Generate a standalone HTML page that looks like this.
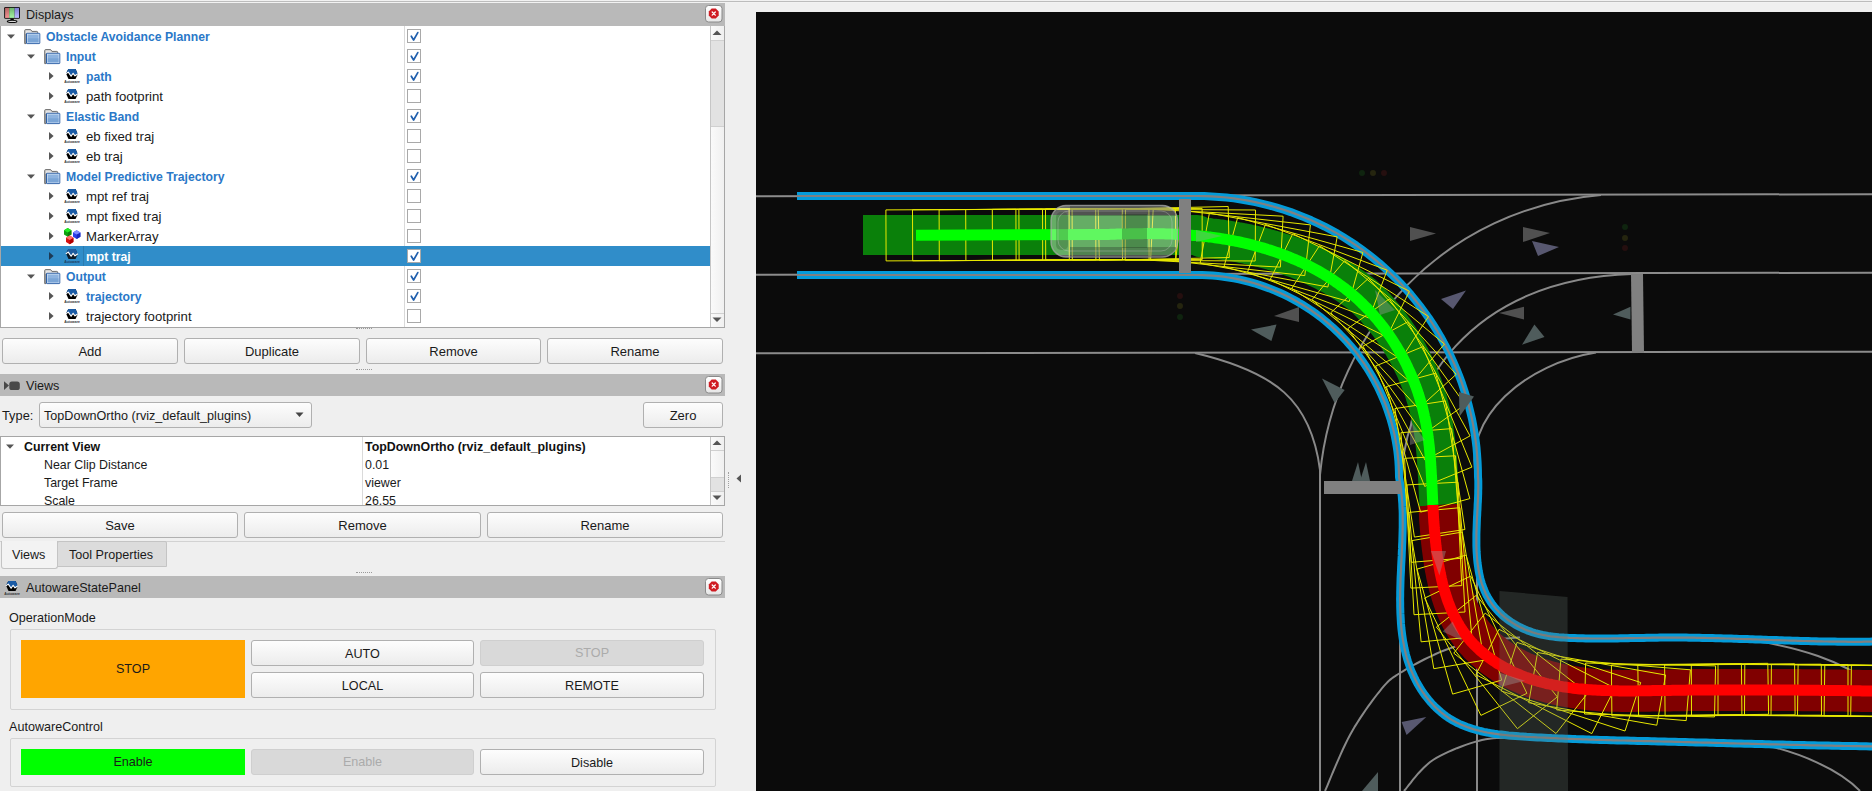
<!DOCTYPE html>
<html><head><meta charset="utf-8"><style>
*{box-sizing:border-box;margin:0;padding:0}
html,body{width:1872px;height:791px;overflow:hidden;background:#efefef;font-family:"Liberation Sans",sans-serif;font-size:13px;color:#1a1a1a;position:relative}
.a{position:absolute}
.tx{white-space:nowrap;line-height:16px}
.hdr{position:absolute;left:0;width:725px;height:22px;background:#b9b9b9}
.cb{position:absolute;left:407px;width:14px;height:14px;border:1px solid #a9a9a9;background:#fff}
.btn{position:absolute;border:1px solid #b0b0b0;border-radius:3px;background:linear-gradient(#fdfdfd,#ececec);text-align:center;font-size:13px;color:#1a1a1a;white-space:nowrap}
</style></head><body>
<div class="a" style="left:0;top:0;width:1872px;height:1px;background:#f1f1f1"></div>
<div class="a" style="left:0;top:1px;width:1872px;height:1px;background:#bcbcbc"></div>
<div class="a" style="left:0;top:2px;width:1872px;height:1px;background:#f2f2f2"></div>
<div class="hdr" style="top:3px;height:23px"></div>
<svg class="a" style="left:4px;top:6px" width="17" height="17" viewBox="0 0 17 17">
<defs><linearGradient id="mr" x1="0" y1="0" x2="0" y2="1"><stop offset="0" stop-color="#b46464"/><stop offset="1" stop-color="#f39393"/></linearGradient>
<linearGradient id="mg" x1="0" y1="0" x2="0" y2="1"><stop offset="0" stop-color="#6cb46c"/><stop offset="1" stop-color="#a6f3a6"/></linearGradient>
<linearGradient id="mb" x1="0" y1="0" x2="0" y2="1"><stop offset="0" stop-color="#7c7cd0"/><stop offset="1" stop-color="#bcbcff"/></linearGradient></defs>
<rect x="0.2" y="0.9" width="15.8" height="11.9" rx="1.3" fill="#080808"/>
<rect x="1.1" y="1.8" width="4.1" height="10.1" fill="url(#mr)"/><rect x="5.2" y="1.8" width="5.4" height="10.1" fill="url(#mg)"/><rect x="10.6" y="1.8" width="4.5" height="10.1" fill="url(#mb)"/>
<path d="M6.6 12.6 H9.6 L9.9 14.2 H6.3Z" fill="#080808"/>
<ellipse cx="8.1" cy="15.4" rx="4.8" ry="1.2" fill="#d8d8d8" stroke="#080808" stroke-width="1.1"/>
</svg>
<div class="a tx" style="left:26px;top:7px;font-size:12.6px;color:#1a1a1a">Displays</div>
<svg class="a" style="left:705px;top:5px" width="18" height="18" viewBox="0 0 18 18">
<defs><linearGradient id="cg" x1="0" y1="0" x2="0" y2="1"><stop offset="0" stop-color="#fff"/><stop offset="1" stop-color="#e6e6e6"/></linearGradient></defs>
<rect x="0.5" y="0.5" width="16.5" height="16.5" rx="3" fill="url(#cg)" stroke="#8a8a8a"/>
<path d="M6.7 3.6 H10.8 L13.7 6.5 V10.6 L10.8 13.5 H6.7 L3.8 10.6 V6.5Z" fill="#cf1b22"/>
<path d="M7.2 7.0 L10.3 10.1 M10.3 7.0 L7.2 10.1" stroke="#fff" stroke-width="1.3" stroke-linecap="round"/>
</svg>
<div class="a" style="left:0;top:26px;width:725px;height:302px;background:#fff;border-left:1px solid #a6a6a6;border-right:1px solid #a6a6a6;border-bottom:1px solid #a6a6a6"></div>
<div class="a" style="left:404px;top:26px;width:1px;height:301px;background:#dadada"></div>
<svg class="a" style="left:7px;top:34px" width="10" height="6" viewBox="0 0 10 6"><path d="M0 0.5 H8 L4 4.8Z" fill="#555"/></svg>
<svg class="a" style="left:24px;top:29px" width="17" height="16" viewBox="0 0 17 16">
<path d="M0.7 14.6 V1.6 Q0.7 0.6 1.7 0.6 H6.6 L8 2.4 H12.8 Q13.6 2.4 13.6 3.2 V5 H2 V14.6Z" fill="#c9c9c9" stroke="#6e6e6e" stroke-width="1"/>
<path d="M1.8 1.6 H6.2 L7.6 3.4 H12.6 V4.2 H1.8Z" fill="#e4e4e4"/>
<rect x="2.5" y="4.3" width="13.3" height="10.3" rx="0.6" fill="#8db3df" stroke="#2d5fa6" stroke-width="1"/>
<rect x="3.4" y="5.2" width="11.5" height="8.5" fill="none" stroke="#c9dbf1" stroke-width="0.8"/>
<rect x="3.8" y="9.3" width="10.7" height="4.0" fill="#7aa5d6"/>
</svg>
<div class="a tx" style="left:46px;top:29px;font-weight:bold;font-size:12.2px;color:#2a78c8">Obstacle Avoidance Planner</div>
<div class="cb" style="top:29px"></div><svg class="a" style="left:408px;top:30px" width="12" height="12" viewBox="0 0 12 12"><path d="M3.3 6.2 L5.6 10 L9.8 2.6" fill="none" stroke="#1f5fae" stroke-width="1.7" stroke-linejoin="round" stroke-linecap="round"/></svg>
<svg class="a" style="left:27px;top:54px" width="10" height="6" viewBox="0 0 10 6"><path d="M0 0.5 H8 L4 4.8Z" fill="#555"/></svg>
<svg class="a" style="left:44px;top:49px" width="17" height="16" viewBox="0 0 17 16">
<path d="M0.7 14.6 V1.6 Q0.7 0.6 1.7 0.6 H6.6 L8 2.4 H12.8 Q13.6 2.4 13.6 3.2 V5 H2 V14.6Z" fill="#c9c9c9" stroke="#6e6e6e" stroke-width="1"/>
<path d="M1.8 1.6 H6.2 L7.6 3.4 H12.6 V4.2 H1.8Z" fill="#e4e4e4"/>
<rect x="2.5" y="4.3" width="13.3" height="10.3" rx="0.6" fill="#8db3df" stroke="#2d5fa6" stroke-width="1"/>
<rect x="3.4" y="5.2" width="11.5" height="8.5" fill="none" stroke="#c9dbf1" stroke-width="0.8"/>
<rect x="3.8" y="9.3" width="10.7" height="4.0" fill="#7aa5d6"/>
</svg>
<div class="a tx" style="left:66px;top:49px;font-weight:bold;font-size:12.2px;color:#2a78c8">Input</div>
<div class="cb" style="top:49px"></div><svg class="a" style="left:408px;top:50px" width="12" height="12" viewBox="0 0 12 12"><path d="M3.3 6.2 L5.6 10 L9.8 2.6" fill="none" stroke="#1f5fae" stroke-width="1.7" stroke-linejoin="round" stroke-linecap="round"/></svg>
<svg class="a" style="left:49px;top:72px" width="6" height="10" viewBox="0 0 6 10"><path d="M0 0 L4.6 4 L0 8Z" fill="#555"/></svg>
<svg class="a" style="left:64px;top:68px" width="17" height="17" viewBox="0 0 17 17">
<path d="M4.3 1 H11.6 L13.8 6.2 L11.5 11 H4.5 L2 5.5Z" fill="#000000"/>
<path d="M4.3 1 H11.6 L13.8 6.0 L11 7.7 L9.1 5.2 L7.1 8.2 L4.3 4.0 L2 5.5Z" fill="#1a5ba6"/>
<path d="M1.8 5.7 L4.3 4.1 L7.1 8.3 L9.1 5.3 L11 7.8 L14 5.8" fill="none" stroke="#fff" stroke-width="1.1" stroke-linejoin="round"/>
<text x="0.3" y="14.9" font-family="Liberation Sans" font-weight="bold" font-size="3.6" textLength="15.6" lengthAdjust="spacingAndGlyphs" fill="#333">Autoware</text>
</svg>
<div class="a tx" style="left:86px;top:69px;font-weight:bold;font-size:12.2px;color:#2a78c8">path</div>
<div class="cb" style="top:69px"></div><svg class="a" style="left:408px;top:70px" width="12" height="12" viewBox="0 0 12 12"><path d="M3.3 6.2 L5.6 10 L9.8 2.6" fill="none" stroke="#1f5fae" stroke-width="1.7" stroke-linejoin="round" stroke-linecap="round"/></svg>
<svg class="a" style="left:49px;top:92px" width="6" height="10" viewBox="0 0 6 10"><path d="M0 0 L4.6 4 L0 8Z" fill="#555"/></svg>
<svg class="a" style="left:64px;top:88px" width="17" height="17" viewBox="0 0 17 17">
<path d="M4.3 1 H11.6 L13.8 6.2 L11.5 11 H4.5 L2 5.5Z" fill="#000000"/>
<path d="M4.3 1 H11.6 L13.8 6.0 L11 7.7 L9.1 5.2 L7.1 8.2 L4.3 4.0 L2 5.5Z" fill="#1a5ba6"/>
<path d="M1.8 5.7 L4.3 4.1 L7.1 8.3 L9.1 5.3 L11 7.8 L14 5.8" fill="none" stroke="#fff" stroke-width="1.1" stroke-linejoin="round"/>
<text x="0.3" y="14.9" font-family="Liberation Sans" font-weight="bold" font-size="3.6" textLength="15.6" lengthAdjust="spacingAndGlyphs" fill="#333">Autoware</text>
</svg>
<div class="a tx" style="left:86px;top:89px;font-size:13.2px;color:#1a1a1a">path footprint</div>
<div class="cb" style="top:89px"></div>
<svg class="a" style="left:27px;top:114px" width="10" height="6" viewBox="0 0 10 6"><path d="M0 0.5 H8 L4 4.8Z" fill="#555"/></svg>
<svg class="a" style="left:44px;top:109px" width="17" height="16" viewBox="0 0 17 16">
<path d="M0.7 14.6 V1.6 Q0.7 0.6 1.7 0.6 H6.6 L8 2.4 H12.8 Q13.6 2.4 13.6 3.2 V5 H2 V14.6Z" fill="#c9c9c9" stroke="#6e6e6e" stroke-width="1"/>
<path d="M1.8 1.6 H6.2 L7.6 3.4 H12.6 V4.2 H1.8Z" fill="#e4e4e4"/>
<rect x="2.5" y="4.3" width="13.3" height="10.3" rx="0.6" fill="#8db3df" stroke="#2d5fa6" stroke-width="1"/>
<rect x="3.4" y="5.2" width="11.5" height="8.5" fill="none" stroke="#c9dbf1" stroke-width="0.8"/>
<rect x="3.8" y="9.3" width="10.7" height="4.0" fill="#7aa5d6"/>
</svg>
<div class="a tx" style="left:66px;top:109px;font-weight:bold;font-size:12.2px;color:#2a78c8">Elastic Band</div>
<div class="cb" style="top:109px"></div><svg class="a" style="left:408px;top:110px" width="12" height="12" viewBox="0 0 12 12"><path d="M3.3 6.2 L5.6 10 L9.8 2.6" fill="none" stroke="#1f5fae" stroke-width="1.7" stroke-linejoin="round" stroke-linecap="round"/></svg>
<svg class="a" style="left:49px;top:132px" width="6" height="10" viewBox="0 0 6 10"><path d="M0 0 L4.6 4 L0 8Z" fill="#555"/></svg>
<svg class="a" style="left:64px;top:128px" width="17" height="17" viewBox="0 0 17 17">
<path d="M4.3 1 H11.6 L13.8 6.2 L11.5 11 H4.5 L2 5.5Z" fill="#000000"/>
<path d="M4.3 1 H11.6 L13.8 6.0 L11 7.7 L9.1 5.2 L7.1 8.2 L4.3 4.0 L2 5.5Z" fill="#1a5ba6"/>
<path d="M1.8 5.7 L4.3 4.1 L7.1 8.3 L9.1 5.3 L11 7.8 L14 5.8" fill="none" stroke="#fff" stroke-width="1.1" stroke-linejoin="round"/>
<text x="0.3" y="14.9" font-family="Liberation Sans" font-weight="bold" font-size="3.6" textLength="15.6" lengthAdjust="spacingAndGlyphs" fill="#333">Autoware</text>
</svg>
<div class="a tx" style="left:86px;top:129px;font-size:13.2px;color:#1a1a1a">eb fixed traj</div>
<div class="cb" style="top:129px"></div>
<svg class="a" style="left:49px;top:152px" width="6" height="10" viewBox="0 0 6 10"><path d="M0 0 L4.6 4 L0 8Z" fill="#555"/></svg>
<svg class="a" style="left:64px;top:148px" width="17" height="17" viewBox="0 0 17 17">
<path d="M4.3 1 H11.6 L13.8 6.2 L11.5 11 H4.5 L2 5.5Z" fill="#000000"/>
<path d="M4.3 1 H11.6 L13.8 6.0 L11 7.7 L9.1 5.2 L7.1 8.2 L4.3 4.0 L2 5.5Z" fill="#1a5ba6"/>
<path d="M1.8 5.7 L4.3 4.1 L7.1 8.3 L9.1 5.3 L11 7.8 L14 5.8" fill="none" stroke="#fff" stroke-width="1.1" stroke-linejoin="round"/>
<text x="0.3" y="14.9" font-family="Liberation Sans" font-weight="bold" font-size="3.6" textLength="15.6" lengthAdjust="spacingAndGlyphs" fill="#333">Autoware</text>
</svg>
<div class="a tx" style="left:86px;top:149px;font-size:13.2px;color:#1a1a1a">eb traj</div>
<div class="cb" style="top:149px"></div>
<svg class="a" style="left:27px;top:174px" width="10" height="6" viewBox="0 0 10 6"><path d="M0 0.5 H8 L4 4.8Z" fill="#555"/></svg>
<svg class="a" style="left:44px;top:169px" width="17" height="16" viewBox="0 0 17 16">
<path d="M0.7 14.6 V1.6 Q0.7 0.6 1.7 0.6 H6.6 L8 2.4 H12.8 Q13.6 2.4 13.6 3.2 V5 H2 V14.6Z" fill="#c9c9c9" stroke="#6e6e6e" stroke-width="1"/>
<path d="M1.8 1.6 H6.2 L7.6 3.4 H12.6 V4.2 H1.8Z" fill="#e4e4e4"/>
<rect x="2.5" y="4.3" width="13.3" height="10.3" rx="0.6" fill="#8db3df" stroke="#2d5fa6" stroke-width="1"/>
<rect x="3.4" y="5.2" width="11.5" height="8.5" fill="none" stroke="#c9dbf1" stroke-width="0.8"/>
<rect x="3.8" y="9.3" width="10.7" height="4.0" fill="#7aa5d6"/>
</svg>
<div class="a tx" style="left:66px;top:169px;font-weight:bold;font-size:12.2px;color:#2a78c8">Model Predictive Trajectory</div>
<div class="cb" style="top:169px"></div><svg class="a" style="left:408px;top:170px" width="12" height="12" viewBox="0 0 12 12"><path d="M3.3 6.2 L5.6 10 L9.8 2.6" fill="none" stroke="#1f5fae" stroke-width="1.7" stroke-linejoin="round" stroke-linecap="round"/></svg>
<svg class="a" style="left:49px;top:192px" width="6" height="10" viewBox="0 0 6 10"><path d="M0 0 L4.6 4 L0 8Z" fill="#555"/></svg>
<svg class="a" style="left:64px;top:188px" width="17" height="17" viewBox="0 0 17 17">
<path d="M4.3 1 H11.6 L13.8 6.2 L11.5 11 H4.5 L2 5.5Z" fill="#000000"/>
<path d="M4.3 1 H11.6 L13.8 6.0 L11 7.7 L9.1 5.2 L7.1 8.2 L4.3 4.0 L2 5.5Z" fill="#1a5ba6"/>
<path d="M1.8 5.7 L4.3 4.1 L7.1 8.3 L9.1 5.3 L11 7.8 L14 5.8" fill="none" stroke="#fff" stroke-width="1.1" stroke-linejoin="round"/>
<text x="0.3" y="14.9" font-family="Liberation Sans" font-weight="bold" font-size="3.6" textLength="15.6" lengthAdjust="spacingAndGlyphs" fill="#333">Autoware</text>
</svg>
<div class="a tx" style="left:86px;top:189px;font-size:13.2px;color:#1a1a1a">mpt ref traj</div>
<div class="cb" style="top:189px"></div>
<svg class="a" style="left:49px;top:212px" width="6" height="10" viewBox="0 0 6 10"><path d="M0 0 L4.6 4 L0 8Z" fill="#555"/></svg>
<svg class="a" style="left:64px;top:208px" width="17" height="17" viewBox="0 0 17 17">
<path d="M4.3 1 H11.6 L13.8 6.2 L11.5 11 H4.5 L2 5.5Z" fill="#000000"/>
<path d="M4.3 1 H11.6 L13.8 6.0 L11 7.7 L9.1 5.2 L7.1 8.2 L4.3 4.0 L2 5.5Z" fill="#1a5ba6"/>
<path d="M1.8 5.7 L4.3 4.1 L7.1 8.3 L9.1 5.3 L11 7.8 L14 5.8" fill="none" stroke="#fff" stroke-width="1.1" stroke-linejoin="round"/>
<text x="0.3" y="14.9" font-family="Liberation Sans" font-weight="bold" font-size="3.6" textLength="15.6" lengthAdjust="spacingAndGlyphs" fill="#333">Autoware</text>
</svg>
<div class="a tx" style="left:86px;top:209px;font-size:13.2px;color:#1a1a1a">mpt fixed traj</div>
<div class="cb" style="top:209px"></div>
<svg class="a" style="left:49px;top:232px" width="6" height="10" viewBox="0 0 6 10"><path d="M0 0 L4.6 4 L0 8Z" fill="#555"/></svg>
<svg class="a" style="left:64px;top:227px" width="18" height="18" viewBox="0 0 18 18"><path d="M3.7 1.1 L7.4 3.2 V7.5 L3.7 9.7 L0.0 7.5 V3.2Z" fill="#10a010"/><path d="M3.7 5.3999999999999995 L7.4 3.2 V7.5 L3.7 9.7Z" fill="#0a800a"/><path d="M3.7 1.1 L7.4 3.2 L3.7 5.3999999999999995 L0.0 3.2Z" fill="#22ee22"/><path d="M12.7 3.3 L16.4 5.4 V9.7 L12.7 11.899999999999999 L9.0 9.7 V5.4Z" fill="#2a3ee8"/><path d="M12.7 7.6 L16.4 5.4 V9.7 L12.7 11.899999999999999Z" fill="#1426c0"/><path d="M12.7 3.3 L16.4 5.4 L12.7 7.6 L9.0 5.4Z" fill="#7f8cff"/><path d="M5.7 8.6 L9.4 10.7 V15.0 L5.7 17.2 L2.0 15.0 V10.7Z" fill="#d81010"/><path d="M5.7 12.899999999999999 L9.4 10.7 V15.0 L5.7 17.2Z" fill="#b00000"/><path d="M5.7 8.6 L9.4 10.7 L5.7 12.899999999999999 L2.0 10.7Z" fill="#ff6a6a"/></svg>
<div class="a tx" style="left:86px;top:229px;font-size:13.2px;color:#1a1a1a">MarkerArray</div>
<div class="cb" style="top:229px"></div>
<div class="a" style="left:1px;top:246px;width:709px;height:20px;background:#308dc9"></div>
<div class="a" style="left:83px;top:246px;width:1px;height:20px;background:#2a7bb0"></div>
<svg class="a" style="left:49px;top:252px" width="6" height="10" viewBox="0 0 6 10"><path d="M0 0 L4.6 4 L0 8Z" fill="#1d3a55"/></svg>
<svg class="a" style="left:64px;top:248px" width="17" height="17" viewBox="0 0 17 17">
<path d="M4.3 1 H11.6 L13.8 6.2 L11.5 11 H4.5 L2 5.5Z" fill="#0d1a26"/>
<path d="M4.3 1 H11.6 L13.8 6.0 L11 7.7 L9.1 5.2 L7.1 8.2 L4.3 4.0 L2 5.5Z" fill="#1f5c9e"/>
<path d="M1.8 5.7 L4.3 4.1 L7.1 8.3 L9.1 5.3 L11 7.8 L14 5.8" fill="none" stroke="#fff" stroke-width="1.1" stroke-linejoin="round"/>
<text x="0.3" y="14.9" font-family="Liberation Sans" font-weight="bold" font-size="3.6" textLength="15.6" lengthAdjust="spacingAndGlyphs" fill="#1d3a5a">Autoware</text>
</svg>
<div class="a tx" style="left:86px;top:249px;font-weight:bold;font-size:12.2px;color:#ffffff">mpt traj</div>
<div class="cb" style="top:249px"></div><svg class="a" style="left:408px;top:250px" width="12" height="12" viewBox="0 0 12 12"><path d="M3.3 6.2 L5.6 10 L9.8 2.6" fill="none" stroke="#1f5fae" stroke-width="1.7" stroke-linejoin="round" stroke-linecap="round"/></svg>
<svg class="a" style="left:27px;top:274px" width="10" height="6" viewBox="0 0 10 6"><path d="M0 0.5 H8 L4 4.8Z" fill="#555"/></svg>
<svg class="a" style="left:44px;top:269px" width="17" height="16" viewBox="0 0 17 16">
<path d="M0.7 14.6 V1.6 Q0.7 0.6 1.7 0.6 H6.6 L8 2.4 H12.8 Q13.6 2.4 13.6 3.2 V5 H2 V14.6Z" fill="#c9c9c9" stroke="#6e6e6e" stroke-width="1"/>
<path d="M1.8 1.6 H6.2 L7.6 3.4 H12.6 V4.2 H1.8Z" fill="#e4e4e4"/>
<rect x="2.5" y="4.3" width="13.3" height="10.3" rx="0.6" fill="#8db3df" stroke="#2d5fa6" stroke-width="1"/>
<rect x="3.4" y="5.2" width="11.5" height="8.5" fill="none" stroke="#c9dbf1" stroke-width="0.8"/>
<rect x="3.8" y="9.3" width="10.7" height="4.0" fill="#7aa5d6"/>
</svg>
<div class="a tx" style="left:66px;top:269px;font-weight:bold;font-size:12.2px;color:#2a78c8">Output</div>
<div class="cb" style="top:269px"></div><svg class="a" style="left:408px;top:270px" width="12" height="12" viewBox="0 0 12 12"><path d="M3.3 6.2 L5.6 10 L9.8 2.6" fill="none" stroke="#1f5fae" stroke-width="1.7" stroke-linejoin="round" stroke-linecap="round"/></svg>
<svg class="a" style="left:49px;top:292px" width="6" height="10" viewBox="0 0 6 10"><path d="M0 0 L4.6 4 L0 8Z" fill="#555"/></svg>
<svg class="a" style="left:64px;top:288px" width="17" height="17" viewBox="0 0 17 17">
<path d="M4.3 1 H11.6 L13.8 6.2 L11.5 11 H4.5 L2 5.5Z" fill="#000000"/>
<path d="M4.3 1 H11.6 L13.8 6.0 L11 7.7 L9.1 5.2 L7.1 8.2 L4.3 4.0 L2 5.5Z" fill="#1a5ba6"/>
<path d="M1.8 5.7 L4.3 4.1 L7.1 8.3 L9.1 5.3 L11 7.8 L14 5.8" fill="none" stroke="#fff" stroke-width="1.1" stroke-linejoin="round"/>
<text x="0.3" y="14.9" font-family="Liberation Sans" font-weight="bold" font-size="3.6" textLength="15.6" lengthAdjust="spacingAndGlyphs" fill="#333">Autoware</text>
</svg>
<div class="a tx" style="left:86px;top:289px;font-weight:bold;font-size:12.2px;color:#2a78c8">trajectory</div>
<div class="cb" style="top:289px"></div><svg class="a" style="left:408px;top:290px" width="12" height="12" viewBox="0 0 12 12"><path d="M3.3 6.2 L5.6 10 L9.8 2.6" fill="none" stroke="#1f5fae" stroke-width="1.7" stroke-linejoin="round" stroke-linecap="round"/></svg>
<svg class="a" style="left:49px;top:312px" width="6" height="10" viewBox="0 0 6 10"><path d="M0 0 L4.6 4 L0 8Z" fill="#555"/></svg>
<svg class="a" style="left:64px;top:308px" width="17" height="17" viewBox="0 0 17 17">
<path d="M4.3 1 H11.6 L13.8 6.2 L11.5 11 H4.5 L2 5.5Z" fill="#000000"/>
<path d="M4.3 1 H11.6 L13.8 6.0 L11 7.7 L9.1 5.2 L7.1 8.2 L4.3 4.0 L2 5.5Z" fill="#1a5ba6"/>
<path d="M1.8 5.7 L4.3 4.1 L7.1 8.3 L9.1 5.3 L11 7.8 L14 5.8" fill="none" stroke="#fff" stroke-width="1.1" stroke-linejoin="round"/>
<text x="0.3" y="14.9" font-family="Liberation Sans" font-weight="bold" font-size="3.6" textLength="15.6" lengthAdjust="spacingAndGlyphs" fill="#333">Autoware</text>
</svg>
<div class="a tx" style="left:86px;top:309px;font-size:13.2px;color:#1a1a1a">trajectory footprint</div>
<div class="cb" style="top:309px"></div>
<div class="a" style="left:710px;top:26px;width:14px;height:301px;background:linear-gradient(90deg,#fafafa,#f0f0f0);border-left:1px solid #c6c6c6"></div>
<div class="a" style="left:711px;top:40px;width:13px;height:87px;background:#e2e2e2;border-top:1px solid #d0d0d0;border-bottom:1px solid #d0d0d0"></div>
<div class="a" style="left:711px;top:313px;width:13px;height:1px;background:#d0d0d0"></div>
<svg class="a" style="left:712px;top:30px" width="10" height="6" viewBox="0 0 10 6"><path d="M0.5 5 H9.5 L5 0.5Z" fill="#555"/></svg>
<svg class="a" style="left:712px;top:317px" width="10" height="6" viewBox="0 0 10 6"><path d="M0.5 0.5 H9.5 L5 5Z" fill="#555"/></svg>
<div class="a" style="left:356px;top:328px;width:16px;height:1px;border-top:1px dotted #9a9a9a"></div>
<div class="btn" style="left:2px;top:338px;width:176px;height:26px;line-height:26px;">Add</div>
<div class="btn" style="left:184px;top:338px;width:176px;height:26px;line-height:26px;">Duplicate</div>
<div class="btn" style="left:366px;top:338px;width:175px;height:26px;line-height:26px;">Remove</div>
<div class="btn" style="left:547px;top:338px;width:176px;height:26px;line-height:26px;">Rename</div>
<div class="a" style="left:356px;top:369px;width:16px;height:1px;border-top:1px dotted #9a9a9a"></div>
<div class="hdr" style="top:374px;height:22px"></div>
<svg class="a" style="left:4px;top:381px" width="17" height="10" viewBox="0 0 17 10">
<path d="M0 0.2 L5 4.6 L0 9Z" fill="#484848"/><rect x="5.3" y="0.6" width="10.5" height="8.4" rx="2.6" fill="#4a4a4a"/></svg>
<div class="a tx" style="left:26px;top:378px;font-size:12.6px;color:#1a1a1a">Views</div>
<svg class="a" style="left:705px;top:376px" width="18" height="18" viewBox="0 0 18 18">
<defs><linearGradient id="cg" x1="0" y1="0" x2="0" y2="1"><stop offset="0" stop-color="#fff"/><stop offset="1" stop-color="#e6e6e6"/></linearGradient></defs>
<rect x="0.5" y="0.5" width="16.5" height="16.5" rx="3" fill="url(#cg)" stroke="#8a8a8a"/>
<path d="M6.7 3.6 H10.8 L13.7 6.5 V10.6 L10.8 13.5 H6.7 L3.8 10.6 V6.5Z" fill="#cf1b22"/>
<path d="M7.2 7.0 L10.3 10.1 M10.3 7.0 L7.2 10.1" stroke="#fff" stroke-width="1.3" stroke-linecap="round"/>
</svg>
<div class="a tx" style="left:2px;top:408px;font-size:12.8px">Type:</div>
<div class="btn" style="left:39px;top:402px;width:273px;height:26px;text-align:left;padding-left:4px;line-height:24px"></div>
<div class="a tx" style="left:44px;top:408px;font-size:12.6px">TopDownOrtho (rviz_default_plugins)</div>
<svg class="a" style="left:295px;top:412px" width="10" height="6" viewBox="0 0 10 6"><path d="M0.5 0.5 H8.5 L4.5 5Z" fill="#444"/></svg>
<div class="btn" style="left:643px;top:402px;width:80px;height:26px;line-height:26px;">Zero</div>
<div class="a" style="left:0;top:436px;width:725px;height:70px;background:#fff;border:1px solid #a6a6a6"></div>
<div class="a" style="left:362px;top:437px;width:1px;height:68px;background:#dadada"></div>
<svg class="a" style="left:6px;top:444px" width="10" height="6" viewBox="0 0 10 6"><path d="M0 0.5 H8 L4 4.8Z" fill="#555"/></svg>
<div class="a tx" style="left:24px;top:439px;font-weight:bold;font-size:12.4px;color:#111">Current View</div>
<div class="a tx" style="left:365px;top:439px;font-weight:bold;font-size:12.4px;color:#111">TopDownOrtho (rviz_default_plugins)</div>
<div class="a tx" style="left:44px;top:457px;font-size:12.4px">Near Clip Distance</div>
<div class="a tx" style="left:365px;top:457px;font-size:12.4px">0.01</div>
<div class="a tx" style="left:44px;top:475px;font-size:12.4px">Target Frame</div>
<div class="a tx" style="left:365px;top:475px;font-size:12.4px">viewer</div>
<div class="a tx" style="left:44px;top:493px;font-size:12.4px">Scale</div>
<div class="a tx" style="left:365px;top:493px;font-size:12.4px">26.55</div>
<div class="a" style="left:0;top:505px;width:725px;height:1px;background:#a6a6a6"></div>
<div class="a" style="left:0;top:506px;width:725px;height:5px;background:#efefef"></div>
<div class="a" style="left:710px;top:437px;width:14px;height:68px;background:linear-gradient(90deg,#fafafa,#f0f0f0);border-left:1px solid #c6c6c6"></div>
<div class="a" style="left:711px;top:450px;width:13px;height:1px;background:#d0d0d0"></div>
<div class="a" style="left:711px;top:477px;width:13px;height:15px;background:#e2e2e2;border-top:1px solid #d0d0d0;border-bottom:1px solid #d0d0d0"></div>
<svg class="a" style="left:712px;top:440px" width="10" height="6" viewBox="0 0 10 6"><path d="M0.5 5 H9.5 L5 0.5Z" fill="#555"/></svg>
<svg class="a" style="left:712px;top:495px" width="10" height="6" viewBox="0 0 10 6"><path d="M0.5 0.5 H9.5 L5 5Z" fill="#555"/></svg>
<div class="btn" style="left:2px;top:512px;width:236px;height:26px;line-height:26px;">Save</div>
<div class="btn" style="left:244px;top:512px;width:237px;height:26px;line-height:26px;">Remove</div>
<div class="btn" style="left:487px;top:512px;width:236px;height:26px;line-height:26px;">Rename</div>
<div class="a" style="left:0;top:541px;width:725px;height:1px;background:#d2d2d2"></div>
<div class="a" style="left:57px;top:541px;width:110px;height:26px;background:#dcdcdc;border:1px solid #c4c4c4;border-radius:2px 2px 0 0"></div>
<div class="a tx" style="left:69px;top:547px;font-size:12.6px">Tool Properties</div>
<div class="a" style="left:1px;top:541px;width:57px;height:28px;background:#f3f3f3;border:1px solid #c4c4c4;border-top:none;border-radius:0 0 3px 3px"></div>
<div class="a tx" style="left:12px;top:547px;font-size:12.6px">Views</div>
<div class="a" style="left:356px;top:572px;width:16px;height:1px;border-top:1px dotted #9a9a9a"></div>
<div class="hdr" style="top:576px;height:22px"></div>
<svg class="a" style="left:4px;top:580px" width="17" height="17" viewBox="0 0 17 17">
<path d="M4.3 1 H11.6 L13.8 6.2 L11.5 11 H4.5 L2 5.5Z" fill="#000000"/>
<path d="M4.3 1 H11.6 L13.8 6.0 L11 7.7 L9.1 5.2 L7.1 8.2 L4.3 4.0 L2 5.5Z" fill="#1a5ba6"/>
<path d="M1.8 5.7 L4.3 4.1 L7.1 8.3 L9.1 5.3 L11 7.8 L14 5.8" fill="none" stroke="#fff" stroke-width="1.1" stroke-linejoin="round"/>
<text x="0.3" y="14.9" font-family="Liberation Sans" font-weight="bold" font-size="3.6" textLength="15.6" lengthAdjust="spacingAndGlyphs" fill="#333">Autoware</text>
</svg>
<div class="a tx" style="left:26px;top:580px;font-size:12.6px;color:#1a1a1a">AutowareStatePanel</div>
<svg class="a" style="left:705px;top:578px" width="18" height="18" viewBox="0 0 18 18">
<defs><linearGradient id="cg" x1="0" y1="0" x2="0" y2="1"><stop offset="0" stop-color="#fff"/><stop offset="1" stop-color="#e6e6e6"/></linearGradient></defs>
<rect x="0.5" y="0.5" width="16.5" height="16.5" rx="3" fill="url(#cg)" stroke="#8a8a8a"/>
<path d="M6.7 3.6 H10.8 L13.7 6.5 V10.6 L10.8 13.5 H6.7 L3.8 10.6 V6.5Z" fill="#cf1b22"/>
<path d="M7.2 7.0 L10.3 10.1 M10.3 7.0 L7.2 10.1" stroke="#fff" stroke-width="1.3" stroke-linecap="round"/>
</svg>
<div class="a tx" style="left:9px;top:610px;font-size:12.6px">OperationMode</div>
<div class="a" style="left:10px;top:629px;width:706px;height:81px;border:1px solid #d3d3d3;border-radius:2px"></div>
<div class="a" style="left:21px;top:640px;width:224px;height:58px;background:#ffa500;text-align:center;line-height:58px;font-size:12.6px">STOP</div>
<div class="btn" style="left:251px;top:640px;width:223px;height:26px;line-height:26px;font-size:12.6px">AUTO</div>
<div class="btn" style="left:480px;top:640px;width:224px;height:26px;background:#d9d9d9;border-color:#cfcfcf;color:#ababab;font-size:12.6px;line-height:25px">STOP</div>
<div class="btn" style="left:251px;top:672px;width:223px;height:26px;line-height:26px;font-size:12.6px">LOCAL</div>
<div class="btn" style="left:480px;top:672px;width:224px;height:26px;line-height:26px;font-size:12.6px">REMOTE</div>
<div class="a tx" style="left:9px;top:719px;font-size:12.6px">AutowareControl</div>
<div class="a" style="left:10px;top:738px;width:706px;height:49px;border:1px solid #d3d3d3;border-radius:2px"></div>
<div class="a" style="left:21px;top:749px;width:224px;height:26px;background:#00ff00;text-align:center;line-height:26px;font-size:12.6px">Enable</div>
<div class="btn" style="left:251px;top:749px;width:223px;height:26px;background:#d9d9d9;border-color:#cfcfcf;color:#ababab;font-size:12.6px;line-height:25px">Enable</div>
<div class="btn" style="left:480px;top:749px;width:224px;height:26px;line-height:26px;font-size:12.6px">Disable</div>
<div class="a" style="left:728px;top:472px;width:1px;height:16px;border-left:1px dotted #a0a0a0"></div>
<svg class="a" style="left:736px;top:474px" width="6" height="9" viewBox="0 0 6 9"><path d="M5 0.5 V8.5 L0.5 4.5Z" fill="#555"/></svg>
<svg class="a" style="left:756px;top:12px" width="1116" height="779" viewBox="756 12 1116 779">
<rect x="756" y="12" width="1116" height="779" fill="#0b0b0b"/>
<path d="M756 196.3 L1872 194.2" fill="none" stroke="#8c8c8c" stroke-width="2"/>
<path d="M756 274.8 L1872 272.7" fill="none" stroke="#8c8c8c" stroke-width="2"/>
<path d="M756 353.3 L1872 351.7" fill="none" stroke="#8c8c8c" stroke-width="2"/>
<path d="M1320 468 V791" fill="none" stroke="#898989" stroke-width="2"/>
<path d="M1400 480 V791" fill="none" stroke="#898989" stroke-width="2"/>
<path d="M1477 480 V791" fill="none" stroke="#898989" stroke-width="2"/>
<path d="M1320 475 C1334 327 1447 208 1601 195" fill="none" stroke="#898989" stroke-width="2"/>
<path d="M1400 500 C1399 386 1472 279 1632 274" fill="none" stroke="#898989" stroke-width="2"/>
<path d="M1477 480 C1460 416 1529 363 1596 352.5" fill="none" stroke="#898989" stroke-width="2"/>
<path d="M1195 353 C1275 372 1311 400 1320 470" fill="none" stroke="#898989" stroke-width="2"/>
<path d="M1325.0 791.0 L1326.2 788.3 L1327.7 784.8 L1329.4 780.7 L1331.3 776.0 L1333.4 771.0 L1335.6 765.8 L1338.0 760.3 L1340.4 754.9 L1342.8 749.5 L1345.3 744.3 L1347.7 739.4 L1350.0 735.0 L1352.4 730.8 L1354.8 726.6 L1357.4 722.5 L1360.0 718.4 L1362.7 714.4 L1365.3 710.5 L1368.0 706.7 L1370.6 703.1 L1373.1 699.7 L1375.5 696.5 L1377.8 693.5 L1380.0 690.8 L1381.9 688.4 L1383.6 686.4 L1385.2 684.6 L1386.6 683.1 L1387.9 681.7 L1389.2 680.5 L1390.6 679.4 L1392.0 678.3 L1393.6 677.1 L1395.5 675.9 L1397.6 674.5 L1400.0 673.0 L1402.8 671.3 L1405.9 669.4 L1409.2 667.5 L1412.8 665.5 L1416.5 663.5 L1420.3 661.5 L1424.1 659.5 L1428.0 657.6 L1431.9 655.8 L1435.6 654.0 L1439.3 652.4 L1442.7 651.0 L1446.0 649.7 L1449.2 648.6 L1452.3 647.5 L1455.4 646.5 L1458.5 645.7 L1461.5 644.8 L1464.5 644.1 L1467.6 643.4 L1470.6 642.8 L1473.7 642.2 L1476.8 641.6 L1480.0 641.0 L1483.4 640.5 L1487.0 640.0 L1490.7 639.6 L1494.6 639.2 L1498.5 638.9 L1502.3 638.6 L1506.0 638.4 L1509.5 638.2 L1512.7 638.0 L1515.6 637.8 L1518.1 637.6 L1520.0 637.5" fill="none" stroke="#898989" stroke-width="2"/>
<path d="M1404.0 791.0 L1405.3 789.5 L1406.9 787.5 L1408.7 785.2 L1410.8 782.6 L1413.0 779.7 L1415.4 776.8 L1418.0 773.7 L1420.8 770.7 L1423.7 767.7 L1426.7 764.9 L1429.8 762.3 L1433.0 760.0 L1436.4 757.9 L1440.1 755.8 L1444.1 753.8 L1448.3 751.8 L1452.6 750.0 L1456.9 748.2 L1461.4 746.5 L1465.7 744.9 L1470.1 743.4 L1474.2 742.1 L1478.2 741.0 L1482.0 740.0 L1485.7 739.2 L1489.4 738.7 L1493.2 738.3 L1496.9 738.1 L1500.5 738.0 L1504.1 738.0 L1507.4 738.1 L1510.6 738.2 L1513.4 738.3 L1516.0 738.4 L1518.2 738.5 L1520.0 738.5" fill="none" stroke="#898989" stroke-width="2"/>
<path d="M1752 640 C1800 648 1840 660 1872 684" fill="none" stroke="#898989" stroke-width="2"/>
<path d="M1758 743.5 C1800 752 1840 770 1860 791" fill="none" stroke="#898989" stroke-width="2"/>
<path d="M797.0 196.0 L1197.0 196.0 L1204.4 196.1 L1211.7 196.4 L1219.0 196.9 L1226.4 197.5 L1233.7 198.4 L1241.0 199.5 L1248.2 200.7 L1255.4 202.1 L1262.6 203.8 L1269.7 205.6 L1276.8 207.6 L1283.8 209.8 L1290.8 212.1 L1297.7 214.7 L1304.5 217.4 L1311.3 220.3 L1318.0 223.4 L1324.6 226.6 L1331.1 230.1 L1337.5 233.6 L1343.8 237.4 L1350.0 241.3 L1356.2 245.4 L1362.2 249.7 L1368.1 254.1 L1373.8 258.6 L1379.5 263.3 L1385.0 268.2 L1390.4 273.2 L1395.7 278.3 L1400.8 283.6 L1405.8 289.0 L1410.7 294.5 L1415.4 300.2 L1419.9 305.9 L1424.3 311.8 L1428.6 317.8 L1432.7 324.0 L1436.6 330.2 L1440.4 336.5 L1443.9 342.9 L1447.4 349.4 L1450.6 356.0 L1453.7 362.7 L1456.6 369.5 L1459.3 376.3 L1461.9 383.2 L1464.2 390.2 L1466.4 397.2 L1468.4 404.3 L1470.2 411.4 L1471.9 418.6 L1473.3 425.8 L1474.5 433.0 L1475.6 440.3 L1476.5 447.6 L1477.1 455.0 L1477.6 462.3 L1477.9 469.6 L1478.0 477.0 L1478.2 479.2 L1478.3 481.5 L1478.3 483.8 L1478.3 486.1 L1478.3 488.5 L1478.2 490.9 L1478.2 493.4 L1478.1 495.9 L1478.0 498.5 L1477.9 501.1 L1477.7 503.7 L1477.6 506.4 L1477.5 509.1 L1477.3 511.8 L1477.2 514.6 L1477.0 517.4 L1476.9 520.1 L1476.8 523.0 L1476.7 525.8 L1476.6 528.6 L1476.5 531.4 L1476.4 534.3 L1476.4 537.1 L1476.4 540.0 L1476.4 542.9 L1476.4 545.7 L1476.5 548.6 L1476.6 551.4 L1476.8 554.2 L1477.0 557.0 L1477.2 559.8 L1477.5 562.6 L1477.9 565.3 L1478.3 568.1 L1478.7 570.8 L1479.2 573.5 L1479.8 576.1 L1480.4 578.7 L1481.1 581.3 L1481.9 583.8 L1482.8 586.3 L1483.7 588.8 L1484.7 591.2 L1485.7 593.5 L1486.9 595.8 L1488.2 598.1 L1489.5 600.2 L1490.9 602.4 L1492.4 604.5 L1494.0 606.5 L1495.6 608.4 L1497.3 610.3 L1499.1 612.2 L1500.9 614.0 L1502.8 615.7 L1504.8 617.4 L1506.8 619.0 L1508.9 620.5 L1511.1 622.0 L1513.3 623.4 L1515.5 624.7 L1517.8 626.0 L1520.1 627.2 L1522.5 628.3 L1524.9 629.4 L1527.3 630.4 L1529.8 631.3 L1532.3 632.2 L1534.9 633.0 L1537.4 633.7 L1540.0 634.3 L1542.6 634.9 L1545.3 635.4 L1547.9 635.9 L1550.6 636.3 L1553.2 636.6 L1555.9 636.9 L1558.6 637.2 L1561.3 637.4 L1564.0 637.6 L1566.7 637.7 L1569.4 637.9 L1572.1 638.0 L1574.8 638.1 L1577.5 638.2 L1580.2 638.3 L1582.9 638.3 L1585.6 638.4 L1588.3 638.4 L1590.9 638.5 L1593.6 638.5 L1596.3 638.5 L1598.9 638.5 L1601.6 638.5 L1604.3 638.5 L1606.9 638.5 L1609.6 638.5 L1612.2 638.4 L1614.9 638.4 L1617.6 638.4 L1620.2 638.3 L1622.8 638.3 L1625.5 638.2 L1628.1 638.2 L1630.8 638.1 L1633.4 638.1 L1636.1 638.0 L1638.7 638.0 L1641.4 637.9 L1644.0 637.9 L1646.6 637.8 L1649.3 637.8 L1651.9 637.7 L1654.6 637.7 L1657.2 637.7 L1659.9 637.6 L1662.5 637.6 L1665.1 637.6 L1667.8 637.6 L1670.4 637.6 L1673.1 637.6 L1675.7 637.6 L1678.4 637.6 L1681.0 637.6 L1683.7 637.6 L1686.3 637.6 L1689.0 637.7 L1691.6 637.7 L1694.2 637.7 L1696.9 637.8 L1699.5 637.8 L1702.2 637.9 L1704.8 637.9 L1707.5 638.0 L1710.1 638.1 L1712.8 638.1 L1715.4 638.2 L1718.1 638.2 L1720.8 638.3 L1723.4 638.4 L1726.1 638.5 L1728.7 638.5 L1731.4 638.6 L1734.0 638.7 L1736.7 638.8 L1739.3 638.9 L1742.0 639.0 L1744.6 639.1 L1747.3 639.1 L1749.9 639.2 L1752.6 639.3 L1755.3 639.4 L1757.9 639.5 L1760.6 639.6 L1763.2 639.7 L1765.9 639.8 L1768.5 639.9 L1771.2 640.0 L1773.8 640.1 L1776.5 640.1 L1779.2 640.2 L1781.8 640.3 L1784.5 640.4 L1787.1 640.5 L1789.8 640.6 L1792.4 640.7 L1795.1 640.7 L1797.7 640.8 L1800.4 640.9 L1803.1 641.0 L1805.7 641.0 L1808.4 641.1 L1811.0 641.2 L1813.7 641.2 L1816.3 641.3 L1819.0 641.4 L1821.6 641.4 L1824.3 641.5 L1827.0 641.5 L1829.6 641.6 L1832.3 641.6 L1834.9 641.6 L1837.6 641.7 L1840.2 641.7 L1842.9 641.7 L1845.5 641.7 L1848.2 641.8 L1850.8 641.8 L1853.5 641.8 L1856.1 641.8 L1858.8 641.8 L1861.4 641.8 L1864.1 641.7 L1866.8 641.7 L1869.4 641.7 L1872.1 641.6 L1874.7 641.6 L1877.4 641.6 L1880.0 641.5" fill="none" stroke="#049bd9" stroke-width="8" stroke-linejoin="round"/>
<path d="M797.0 196.0 L1197.0 196.0 L1204.4 196.1 L1211.7 196.4 L1219.0 196.9 L1226.4 197.5 L1233.7 198.4 L1241.0 199.5 L1248.2 200.7 L1255.4 202.1 L1262.6 203.8 L1269.7 205.6 L1276.8 207.6 L1283.8 209.8 L1290.8 212.1 L1297.7 214.7 L1304.5 217.4 L1311.3 220.3 L1318.0 223.4 L1324.6 226.6 L1331.1 230.1 L1337.5 233.6 L1343.8 237.4 L1350.0 241.3 L1356.2 245.4 L1362.2 249.7 L1368.1 254.1 L1373.8 258.6 L1379.5 263.3 L1385.0 268.2 L1390.4 273.2 L1395.7 278.3 L1400.8 283.6 L1405.8 289.0 L1410.7 294.5 L1415.4 300.2 L1419.9 305.9 L1424.3 311.8 L1428.6 317.8 L1432.7 324.0 L1436.6 330.2 L1440.4 336.5 L1443.9 342.9 L1447.4 349.4 L1450.6 356.0 L1453.7 362.7 L1456.6 369.5 L1459.3 376.3 L1461.9 383.2 L1464.2 390.2 L1466.4 397.2 L1468.4 404.3 L1470.2 411.4 L1471.9 418.6 L1473.3 425.8 L1474.5 433.0 L1475.6 440.3 L1476.5 447.6 L1477.1 455.0 L1477.6 462.3 L1477.9 469.6 L1478.0 477.0 L1478.2 479.2 L1478.3 481.5 L1478.3 483.8 L1478.3 486.1 L1478.3 488.5 L1478.2 490.9 L1478.2 493.4 L1478.1 495.9 L1478.0 498.5 L1477.9 501.1 L1477.7 503.7 L1477.6 506.4 L1477.5 509.1 L1477.3 511.8 L1477.2 514.6 L1477.0 517.4 L1476.9 520.1 L1476.8 523.0 L1476.7 525.8 L1476.6 528.6 L1476.5 531.4 L1476.4 534.3 L1476.4 537.1 L1476.4 540.0 L1476.4 542.9 L1476.4 545.7 L1476.5 548.6 L1476.6 551.4 L1476.8 554.2 L1477.0 557.0 L1477.2 559.8 L1477.5 562.6 L1477.9 565.3 L1478.3 568.1 L1478.7 570.8 L1479.2 573.5 L1479.8 576.1 L1480.4 578.7 L1481.1 581.3 L1481.9 583.8 L1482.8 586.3 L1483.7 588.8 L1484.7 591.2 L1485.7 593.5 L1486.9 595.8 L1488.2 598.1 L1489.5 600.2 L1490.9 602.4 L1492.4 604.5 L1494.0 606.5 L1495.6 608.4 L1497.3 610.3 L1499.1 612.2 L1500.9 614.0 L1502.8 615.7 L1504.8 617.4 L1506.8 619.0 L1508.9 620.5 L1511.1 622.0 L1513.3 623.4 L1515.5 624.7 L1517.8 626.0 L1520.1 627.2 L1522.5 628.3 L1524.9 629.4 L1527.3 630.4 L1529.8 631.3 L1532.3 632.2 L1534.9 633.0 L1537.4 633.7 L1540.0 634.3 L1542.6 634.9 L1545.3 635.4 L1547.9 635.9 L1550.6 636.3 L1553.2 636.6 L1555.9 636.9 L1558.6 637.2 L1561.3 637.4 L1564.0 637.6 L1566.7 637.7 L1569.4 637.9 L1572.1 638.0 L1574.8 638.1 L1577.5 638.2 L1580.2 638.3 L1582.9 638.3 L1585.6 638.4 L1588.3 638.4 L1590.9 638.5 L1593.6 638.5 L1596.3 638.5 L1598.9 638.5 L1601.6 638.5 L1604.3 638.5 L1606.9 638.5 L1609.6 638.5 L1612.2 638.4 L1614.9 638.4 L1617.6 638.4 L1620.2 638.3 L1622.8 638.3 L1625.5 638.2 L1628.1 638.2 L1630.8 638.1 L1633.4 638.1 L1636.1 638.0 L1638.7 638.0 L1641.4 637.9 L1644.0 637.9 L1646.6 637.8 L1649.3 637.8 L1651.9 637.7 L1654.6 637.7 L1657.2 637.7 L1659.9 637.6 L1662.5 637.6 L1665.1 637.6 L1667.8 637.6 L1670.4 637.6 L1673.1 637.6 L1675.7 637.6 L1678.4 637.6 L1681.0 637.6 L1683.7 637.6 L1686.3 637.6 L1689.0 637.7 L1691.6 637.7 L1694.2 637.7 L1696.9 637.8 L1699.5 637.8 L1702.2 637.9 L1704.8 637.9 L1707.5 638.0 L1710.1 638.1 L1712.8 638.1 L1715.4 638.2 L1718.1 638.2 L1720.8 638.3 L1723.4 638.4 L1726.1 638.5 L1728.7 638.5 L1731.4 638.6 L1734.0 638.7 L1736.7 638.8 L1739.3 638.9 L1742.0 639.0 L1744.6 639.1 L1747.3 639.1 L1749.9 639.2 L1752.6 639.3 L1755.3 639.4 L1757.9 639.5 L1760.6 639.6 L1763.2 639.7 L1765.9 639.8 L1768.5 639.9 L1771.2 640.0 L1773.8 640.1 L1776.5 640.1 L1779.2 640.2 L1781.8 640.3 L1784.5 640.4 L1787.1 640.5 L1789.8 640.6 L1792.4 640.7 L1795.1 640.7 L1797.7 640.8 L1800.4 640.9 L1803.1 641.0 L1805.7 641.0 L1808.4 641.1 L1811.0 641.2 L1813.7 641.2 L1816.3 641.3 L1819.0 641.4 L1821.6 641.4 L1824.3 641.5 L1827.0 641.5 L1829.6 641.6 L1832.3 641.6 L1834.9 641.6 L1837.6 641.7 L1840.2 641.7 L1842.9 641.7 L1845.5 641.7 L1848.2 641.8 L1850.8 641.8 L1853.5 641.8 L1856.1 641.8 L1858.8 641.8 L1861.4 641.8 L1864.1 641.7 L1866.8 641.7 L1869.4 641.7 L1872.1 641.6 L1874.7 641.6 L1877.4 641.6 L1880.0 641.5" fill="none" stroke="#808080" stroke-width="2.2" stroke-linejoin="round"/>
<path d="M797.0 275.0 L1197.0 275.0 L1202.3 275.1 L1207.6 275.3 L1212.8 275.6 L1218.1 276.1 L1223.4 276.7 L1228.6 277.5 L1233.8 278.4 L1239.0 279.4 L1244.2 280.6 L1249.3 281.9 L1254.4 283.3 L1259.4 284.9 L1264.4 286.6 L1269.4 288.4 L1274.3 290.4 L1279.2 292.5 L1284.0 294.7 L1288.7 297.0 L1293.4 299.5 L1298.0 302.1 L1302.5 304.8 L1307.0 307.6 L1311.4 310.5 L1315.7 313.6 L1320.0 316.7 L1324.1 320.0 L1328.2 323.4 L1332.2 326.9 L1336.0 330.5 L1339.8 334.2 L1343.5 338.0 L1347.1 341.8 L1350.6 345.8 L1354.0 349.9 L1357.3 354.0 L1360.4 358.3 L1363.5 362.6 L1366.4 367.0 L1369.2 371.5 L1371.9 376.0 L1374.5 380.6 L1377.0 385.3 L1379.3 390.0 L1381.5 394.8 L1383.6 399.7 L1385.6 404.6 L1387.4 409.6 L1389.1 414.6 L1390.7 419.6 L1392.1 424.7 L1393.4 429.8 L1394.6 435.0 L1395.6 440.2 L1396.5 445.4 L1397.3 450.6 L1397.9 455.9 L1398.4 461.2 L1398.7 466.4 L1398.9 471.7 L1399.0 477.0 L1399.6 480.3 L1400.1 483.5 L1400.6 486.7 L1401.1 490.0 L1401.4 493.3 L1401.8 496.6 L1402.0 499.9 L1402.3 503.3 L1402.4 506.7 L1402.6 510.1 L1402.7 513.5 L1402.7 517.0 L1402.7 520.4 L1402.7 523.9 L1402.7 527.4 L1402.6 530.9 L1402.5 534.5 L1402.4 538.0 L1402.3 541.6 L1402.1 545.2 L1402.0 548.7 L1401.8 552.3 L1401.7 555.9 L1401.5 559.5 L1401.3 563.1 L1401.1 566.7 L1401.0 570.3 L1400.8 574.0 L1400.6 577.6 L1400.5 581.2 L1400.4 584.8 L1400.3 588.4 L1400.2 592.0 L1400.2 595.6 L1400.1 599.2 L1400.2 602.8 L1400.2 606.3 L1400.3 609.9 L1400.4 613.4 L1400.6 617.0 L1400.8 620.5 L1401.0 624.0 L1401.3 627.5 L1401.7 631.0 L1402.1 634.4 L1402.6 637.8 L1403.1 641.3 L1403.8 644.6 L1404.4 648.0 L1405.2 651.4 L1406.0 654.7 L1406.9 658.0 L1407.9 661.2 L1409.0 664.4 L1410.1 667.6 L1411.3 670.8 L1412.7 673.9 L1414.1 677.0 L1415.6 680.1 L1417.2 683.1 L1419.0 686.1 L1420.7 689.0 L1422.6 691.9 L1424.6 694.7 L1426.7 697.4 L1428.8 700.0 L1431.0 702.6 L1433.3 705.1 L1435.7 707.5 L1438.2 709.8 L1440.8 712.1 L1443.4 714.2 L1446.1 716.2 L1448.9 718.1 L1451.7 719.9 L1454.7 721.5 L1457.7 723.1 L1460.7 724.5 L1463.9 725.8 L1467.0 727.0 L1470.3 728.1 L1473.6 729.2 L1476.9 730.1 L1480.3 731.0 L1483.7 731.8 L1487.2 732.5 L1490.6 733.1 L1494.2 733.7 L1497.7 734.2 L1501.3 734.6 L1504.9 735.0 L1508.5 735.4 L1512.1 735.7 L1515.7 736.0 L1519.3 736.3 L1522.9 736.5 L1526.5 736.8 L1530.1 737.0 L1533.7 737.2 L1537.3 737.4 L1540.9 737.5 L1544.4 737.7 L1548.0 737.9 L1551.5 738.1 L1555.0 738.2 L1558.5 738.4 L1562.0 738.5 L1565.5 738.7 L1569.0 738.8 L1572.5 738.9 L1575.9 739.1 L1579.4 739.2 L1582.8 739.3 L1586.3 739.4 L1589.7 739.6 L1593.2 739.7 L1596.6 739.8 L1600.0 739.9 L1603.4 740.0 L1606.8 740.1 L1610.3 740.2 L1613.7 740.3 L1617.1 740.4 L1620.5 740.5 L1623.9 740.5 L1627.3 740.6 L1630.7 740.7 L1634.1 740.8 L1637.5 740.9 L1640.9 741.0 L1644.3 741.1 L1647.7 741.1 L1651.2 741.2 L1654.6 741.3 L1658.0 741.4 L1661.4 741.5 L1664.8 741.6 L1668.3 741.7 L1671.7 741.7 L1675.2 741.8 L1678.6 741.9 L1682.0 742.0 L1685.5 742.1 L1689.0 742.2 L1692.4 742.3 L1695.9 742.4 L1699.3 742.5 L1702.8 742.6 L1706.3 742.6 L1709.7 742.7 L1713.2 742.8 L1716.7 742.9 L1720.2 743.0 L1723.7 743.1 L1727.1 743.2 L1730.6 743.3 L1734.1 743.4 L1737.6 743.5 L1741.1 743.6 L1744.6 743.7 L1748.1 743.7 L1751.6 743.8 L1755.1 743.9 L1758.6 744.0 L1762.0 744.1 L1765.5 744.2 L1769.0 744.3 L1772.5 744.4 L1776.0 744.4 L1779.5 744.5 L1783.0 744.6 L1786.5 744.7 L1790.0 744.8 L1793.5 744.9 L1797.0 744.9 L1800.5 745.0 L1803.9 745.1 L1807.4 745.2 L1810.9 745.3 L1814.4 745.3 L1817.9 745.4 L1821.3 745.5 L1824.8 745.6 L1828.3 745.6 L1831.8 745.7 L1835.2 745.8 L1838.7 745.8 L1842.2 745.9 L1845.6 746.0 L1849.1 746.0 L1852.5 746.1 L1856.0 746.1 L1859.4 746.2 L1862.9 746.3 L1866.3 746.3 L1869.7 746.4 L1873.2 746.4 L1876.6 746.5 L1880.0 746.5" fill="none" stroke="#049bd9" stroke-width="8" stroke-linejoin="round"/>
<path d="M797.0 275.0 L1197.0 275.0 L1202.3 275.1 L1207.6 275.3 L1212.8 275.6 L1218.1 276.1 L1223.4 276.7 L1228.6 277.5 L1233.8 278.4 L1239.0 279.4 L1244.2 280.6 L1249.3 281.9 L1254.4 283.3 L1259.4 284.9 L1264.4 286.6 L1269.4 288.4 L1274.3 290.4 L1279.2 292.5 L1284.0 294.7 L1288.7 297.0 L1293.4 299.5 L1298.0 302.1 L1302.5 304.8 L1307.0 307.6 L1311.4 310.5 L1315.7 313.6 L1320.0 316.7 L1324.1 320.0 L1328.2 323.4 L1332.2 326.9 L1336.0 330.5 L1339.8 334.2 L1343.5 338.0 L1347.1 341.8 L1350.6 345.8 L1354.0 349.9 L1357.3 354.0 L1360.4 358.3 L1363.5 362.6 L1366.4 367.0 L1369.2 371.5 L1371.9 376.0 L1374.5 380.6 L1377.0 385.3 L1379.3 390.0 L1381.5 394.8 L1383.6 399.7 L1385.6 404.6 L1387.4 409.6 L1389.1 414.6 L1390.7 419.6 L1392.1 424.7 L1393.4 429.8 L1394.6 435.0 L1395.6 440.2 L1396.5 445.4 L1397.3 450.6 L1397.9 455.9 L1398.4 461.2 L1398.7 466.4 L1398.9 471.7 L1399.0 477.0 L1399.6 480.3 L1400.1 483.5 L1400.6 486.7 L1401.1 490.0 L1401.4 493.3 L1401.8 496.6 L1402.0 499.9 L1402.3 503.3 L1402.4 506.7 L1402.6 510.1 L1402.7 513.5 L1402.7 517.0 L1402.7 520.4 L1402.7 523.9 L1402.7 527.4 L1402.6 530.9 L1402.5 534.5 L1402.4 538.0 L1402.3 541.6 L1402.1 545.2 L1402.0 548.7 L1401.8 552.3 L1401.7 555.9 L1401.5 559.5 L1401.3 563.1 L1401.1 566.7 L1401.0 570.3 L1400.8 574.0 L1400.6 577.6 L1400.5 581.2 L1400.4 584.8 L1400.3 588.4 L1400.2 592.0 L1400.2 595.6 L1400.1 599.2 L1400.2 602.8 L1400.2 606.3 L1400.3 609.9 L1400.4 613.4 L1400.6 617.0 L1400.8 620.5 L1401.0 624.0 L1401.3 627.5 L1401.7 631.0 L1402.1 634.4 L1402.6 637.8 L1403.1 641.3 L1403.8 644.6 L1404.4 648.0 L1405.2 651.4 L1406.0 654.7 L1406.9 658.0 L1407.9 661.2 L1409.0 664.4 L1410.1 667.6 L1411.3 670.8 L1412.7 673.9 L1414.1 677.0 L1415.6 680.1 L1417.2 683.1 L1419.0 686.1 L1420.7 689.0 L1422.6 691.9 L1424.6 694.7 L1426.7 697.4 L1428.8 700.0 L1431.0 702.6 L1433.3 705.1 L1435.7 707.5 L1438.2 709.8 L1440.8 712.1 L1443.4 714.2 L1446.1 716.2 L1448.9 718.1 L1451.7 719.9 L1454.7 721.5 L1457.7 723.1 L1460.7 724.5 L1463.9 725.8 L1467.0 727.0 L1470.3 728.1 L1473.6 729.2 L1476.9 730.1 L1480.3 731.0 L1483.7 731.8 L1487.2 732.5 L1490.6 733.1 L1494.2 733.7 L1497.7 734.2 L1501.3 734.6 L1504.9 735.0 L1508.5 735.4 L1512.1 735.7 L1515.7 736.0 L1519.3 736.3 L1522.9 736.5 L1526.5 736.8 L1530.1 737.0 L1533.7 737.2 L1537.3 737.4 L1540.9 737.5 L1544.4 737.7 L1548.0 737.9 L1551.5 738.1 L1555.0 738.2 L1558.5 738.4 L1562.0 738.5 L1565.5 738.7 L1569.0 738.8 L1572.5 738.9 L1575.9 739.1 L1579.4 739.2 L1582.8 739.3 L1586.3 739.4 L1589.7 739.6 L1593.2 739.7 L1596.6 739.8 L1600.0 739.9 L1603.4 740.0 L1606.8 740.1 L1610.3 740.2 L1613.7 740.3 L1617.1 740.4 L1620.5 740.5 L1623.9 740.5 L1627.3 740.6 L1630.7 740.7 L1634.1 740.8 L1637.5 740.9 L1640.9 741.0 L1644.3 741.1 L1647.7 741.1 L1651.2 741.2 L1654.6 741.3 L1658.0 741.4 L1661.4 741.5 L1664.8 741.6 L1668.3 741.7 L1671.7 741.7 L1675.2 741.8 L1678.6 741.9 L1682.0 742.0 L1685.5 742.1 L1689.0 742.2 L1692.4 742.3 L1695.9 742.4 L1699.3 742.5 L1702.8 742.6 L1706.3 742.6 L1709.7 742.7 L1713.2 742.8 L1716.7 742.9 L1720.2 743.0 L1723.7 743.1 L1727.1 743.2 L1730.6 743.3 L1734.1 743.4 L1737.6 743.5 L1741.1 743.6 L1744.6 743.7 L1748.1 743.7 L1751.6 743.8 L1755.1 743.9 L1758.6 744.0 L1762.0 744.1 L1765.5 744.2 L1769.0 744.3 L1772.5 744.4 L1776.0 744.4 L1779.5 744.5 L1783.0 744.6 L1786.5 744.7 L1790.0 744.8 L1793.5 744.9 L1797.0 744.9 L1800.5 745.0 L1803.9 745.1 L1807.4 745.2 L1810.9 745.3 L1814.4 745.3 L1817.9 745.4 L1821.3 745.5 L1824.8 745.6 L1828.3 745.6 L1831.8 745.7 L1835.2 745.8 L1838.7 745.8 L1842.2 745.9 L1845.6 746.0 L1849.1 746.0 L1852.5 746.1 L1856.0 746.1 L1859.4 746.2 L1862.9 746.3 L1866.3 746.3 L1869.7 746.4 L1873.2 746.4 L1876.6 746.5 L1880.0 746.5" fill="none" stroke="#808080" stroke-width="2.2" stroke-linejoin="round"/>
<path d="M863.0 235.0 L1197.0 235.0 L1201.8 237.4 L1204.7 237.6 L1207.7 237.9 L1210.7 238.3 L1213.7 238.6 L1216.6 239.0 L1219.6 239.3 L1222.6 239.8 L1225.5 240.2 L1228.5 240.6 L1231.4 241.1 L1234.4 241.6 L1237.3 242.1 L1240.3 242.7 L1243.2 243.3 L1246.2 243.8 L1249.1 244.5 L1252.0 245.1 L1255.0 245.8 L1257.9 246.5 L1260.8 247.2 L1263.7 247.9 L1266.6 248.7 L1269.5 249.5 L1272.4 250.3 L1275.3 251.2 L1278.2 252.1 L1281.0 253.0 L1283.9 253.9 L1286.8 254.9 L1289.6 255.9 L1292.4 256.9 L1295.3 257.9 L1298.1 259.0 L1300.9 260.1 L1303.7 261.2 L1306.5 262.4 L1309.3 263.6 L1312.1 264.8 L1314.9 266.1 L1317.6 267.4 L1320.3 268.7 L1323.1 270.1 L1325.8 271.4 L1328.5 272.9 L1331.2 274.3 L1333.8 275.8 L1336.5 277.3 L1339.1 278.9 L1341.8 280.5 L1344.4 282.1 L1346.9 283.8 L1349.5 285.5 L1352.1 287.2 L1354.6 289.0 L1357.1 290.8 L1359.6 292.7 L1362.1 294.6 L1364.4 296.6 L1366.6 298.7 L1368.8 300.9 L1371.0 303.1 L1373.2 305.3 L1375.3 307.5 L1377.4 309.9 L1379.4 312.2 L1381.4 314.5 L1383.4 316.9 L1385.4 319.3 L1387.3 321.7 L1389.1 324.1 L1391.0 326.6 L1392.8 329.1 L1394.6 331.7 L1396.3 334.2 L1398.0 336.8 L1399.7 339.4 L1401.3 342.0 L1403.0 344.6 L1404.5 347.3 L1406.1 349.9 L1407.6 352.7 L1409.0 355.4 L1410.5 358.1 L1411.8 360.9 L1413.2 363.7 L1414.5 366.4 L1415.8 369.2 L1417.0 372.1 L1418.2 374.9 L1419.4 377.8 L1420.5 380.6 L1421.6 383.5 L1422.7 386.4 L1423.7 389.3 L1424.7 392.3 L1425.6 395.2 L1426.5 398.1 L1427.4 401.1 L1428.2 404.1 L1429.0 407.1 L1429.7 410.0 L1430.5 413.1 L1431.1 416.1 L1431.7 419.1 L1432.3 422.1 L1432.9 425.1 L1433.4 428.2 L1433.8 431.2 L1434.3 434.2 L1434.7 437.3 L1435.1 440.3 L1435.4 443.4 L1435.8 446.4 L1436.1 449.4 L1436.4 452.5 L1436.6 455.5 L1436.9 458.5 L1437.1 461.5 L1437.3 464.6 L1437.5 467.6 L1437.7 470.6 L1437.8 473.6 L1438.0 476.6 L1438.2 479.7 L1438.3 482.7 L1438.5 485.7 L1438.6 488.7 L1438.7 491.7 L1438.9 494.7 L1439.0 497.6 L1439.2 500.6 L1439.3 503.6 L1439.4 505.0" fill="none" stroke="#0a800a" stroke-width="40" stroke-linejoin="round"/>
<path d="M1439.4 505.0 L1439.5 506.6 L1439.6 509.6 L1439.8 512.6 L1440.0 515.5 L1440.1 518.5 L1440.3 521.5 L1440.6 524.4 L1440.8 527.4 L1441.0 530.3 L1441.3 533.3 L1441.5 536.3 L1441.8 539.2 L1442.1 542.1 L1442.5 545.1 L1442.8 548.0 L1443.2 550.9 L1443.6 553.8 L1444.0 556.8 L1444.4 559.7 L1444.8 562.6 L1445.3 565.5 L1445.8 568.4 L1446.4 571.2 L1446.9 574.1 L1447.5 576.9 L1448.2 579.8 L1448.8 582.7 L1449.5 585.5 L1450.3 588.3 L1451.1 591.0 L1451.9 593.8 L1452.8 596.6 L1453.7 599.3 L1454.7 602.1 L1455.7 604.7 L1456.8 607.5 L1457.9 610.1 L1459.1 612.7 L1460.3 615.3 L1461.6 617.9 L1462.9 620.3 L1464.3 622.9 L1465.8 625.3 L1467.3 627.7 L1468.9 630.1 L1470.6 632.4 L1472.2 634.7 L1474.1 636.9 L1475.9 639.1 L1477.8 641.2 L1479.7 643.3 L1481.8 645.4 L1483.8 647.4 L1486.0 649.3 L1488.2 651.3 L1490.4 653.1 L1492.7 654.9 L1494.9 656.6 L1497.3 658.4 L1499.7 660.0 L1502.1 661.6 L1504.6 663.2 L1507.1 664.7 L1509.6 666.1 L1512.2 667.5 L1514.8 668.9 L1517.4 670.2 L1520.1 671.5 L1522.7 672.7 L1525.5 673.9 L1528.2 675.0 L1530.9 676.1 L1533.7 677.1 L1536.5 678.1 L1539.3 679.1 L1542.1 680.0 L1545.0 680.8 L1547.8 681.6 L1550.7 682.4 L1553.6 683.1 L1556.5 683.8 L1559.4 684.5 L1562.3 685.1 L1565.2 685.7 L1568.2 686.2 L1571.1 686.7 L1574.1 687.2 L1577.0 687.7 L1580.0 688.1 L1582.9 688.5 L1585.9 688.9 L1588.9 689.2 L1591.9 689.6 L1594.9 689.9 L1597.8 690.1 L1600.8 690.4 L1603.8 690.5 L1606.8 690.6 L1609.8 690.7 L1612.8 690.7 L1615.8 690.8 L1618.8 690.8 L1621.8 690.9 L1624.8 690.9 L1627.8 690.9 L1630.8 690.9 L1633.8 690.9 L1636.8 690.8 L1639.8 690.8 L1642.8 690.8 L1645.8 690.7 L1648.8 690.7 L1651.8 690.6 L1654.8 690.6 L1657.8 690.5 L1660.8 690.5 L1663.8 690.5 L1666.8 690.4 L1669.8 690.4 L1672.8 690.3 L1675.8 690.3 L1678.8 690.2 L1681.8 690.2 L1684.8 690.2 L1687.8 690.1 L1690.8 690.1 L1693.8 690.1 L1696.8 690.1 L1699.8 690.0 L1702.8 690.0 L1705.8 690.0 L1708.8 690.0 L1711.8 690.0 L1714.8 689.9 L1717.8 689.9 L1720.8 689.9 L1723.8 689.9 L1726.8 689.9 L1729.8 689.9 L1732.8 689.9 L1735.8 689.9 L1738.8 689.9 L1741.8 689.9 L1744.8 689.9 L1747.8 689.9 L1750.8 689.9 L1753.8 689.9 L1756.8 689.9 L1759.8 689.9 L1762.8 689.9 L1765.8 689.9 L1768.8 689.9 L1771.8 690.0 L1774.8 690.0 L1777.8 690.0 L1780.8 690.0 L1783.8 690.0 L1786.8 690.1 L1789.8 690.1 L1792.8 690.1 L1795.8 690.1 L1798.8 690.1 L1801.8 690.2 L1804.8 690.2 L1807.8 690.2 L1810.8 690.3 L1813.8 690.3 L1816.8 690.3 L1819.8 690.3 L1822.8 690.4 L1825.8 690.4 L1828.8 690.5 L1831.8 690.5 L1834.8 690.5 L1837.8 690.6 L1840.8 690.6 L1843.8 690.6 L1846.8 690.7 L1849.8 690.7 L1852.8 690.7 L1855.8 690.8 L1858.8 690.8 L1861.8 690.9 L1864.8 690.9 L1867.8 691.0 L1870.8 691.0 L1873.8 691.0 L1876.8 691.1 L1879.8 691.1" fill="none" stroke="#800000" stroke-width="42" stroke-linejoin="round"/>
<path d="M885.9 209.9 L1015.9 209.3 L1016.1 260.3 L886.1 260.9Z M912.5 209.8 L1042.5 209.2 L1042.7 260.2 L912.7 260.8Z M939.1 209.7 L1069.1 209.0 L1069.3 260.0 L939.3 260.7Z M965.7 209.5 L1095.7 208.9 L1095.9 259.9 L965.9 260.5Z M992.3 209.4 L1122.3 208.8 L1122.5 259.8 L992.5 260.4Z M1018.9 209.3 L1148.9 208.7 L1149.1 259.7 L1019.1 260.3Z M1045.5 208.9 L1175.5 208.3 L1175.7 259.3 L1045.7 259.9Z M1072.1 209.0 L1202.1 208.4 L1202.3 259.4 L1072.3 260.0Z M1098.2 209.4 L1228.2 206.5 L1229.3 257.5 L1099.4 260.4Z M1125.5 209.3 L1255.5 210.0 L1255.2 261.0 L1125.2 260.3Z M1153.2 209.4 L1283.1 216.2 L1280.4 267.1 L1150.6 260.3Z M1181.2 210.5 L1310.4 224.9 L1304.8 275.6 L1175.6 261.2Z M1209.4 213.1 L1337.2 236.9 L1327.9 287.0 L1200.1 263.2Z M1237.7 217.6 L1362.9 252.5 L1349.2 301.6 L1224.0 266.7Z M1265.5 224.4 L1387.2 270.2 L1369.2 318.0 L1247.5 272.1Z M1292.8 233.7 L1409.4 291.2 L1386.8 337.0 L1270.2 279.5Z M1319.5 245.7 L1428.5 316.5 L1400.8 359.3 L1291.7 288.5Z M1344.7 260.6 L1444.4 344.1 L1411.6 383.2 L1312.0 299.7Z M1368.5 278.3 L1456.2 374.3 L1418.5 408.7 L1330.8 312.7Z M1389.3 298.9 L1465.1 404.5 L1423.6 434.3 L1347.8 328.6Z M1407.8 321.8 L1470.0 435.9 L1425.2 460.3 L1363.0 346.2Z M1422.8 346.7 L1471.9 467.1 L1424.7 486.4 L1375.6 366.0Z M1435.6 373.2 L1469.8 498.6 L1420.6 512.1 L1386.4 386.6Z M1445.4 400.9 L1464.9 529.5 L1414.4 537.1 L1394.9 408.6Z M1451.7 428.6 L1462.1 558.2 L1411.3 562.3 L1400.9 432.7Z M1455.5 455.8 L1461.8 585.6 L1410.9 588.1 L1404.6 458.3Z M1457.9 482.2 L1465.0 612.0 L1414.0 614.7 L1407.0 484.9Z M1459.9 507.7 L1471.9 637.1 L1421.1 641.8 L1409.1 512.4Z M1462.3 532.0 L1484.1 660.2 L1433.8 668.7 L1412.0 540.6Z M1466.1 555.1 L1501.7 680.1 L1452.6 694.1 L1417.0 569.1Z M1470.7 576.1 L1526.9 693.3 L1480.9 715.4 L1424.7 598.1Z M1476.3 595.3 L1557.3 696.9 L1517.4 728.7 L1436.4 627.1Z M1485.2 613.1 L1587.5 693.3 L1556.0 733.5 L1453.8 653.2Z M1499.0 629.3 L1614.9 688.1 L1591.8 733.6 L1475.9 674.7Z M1517.0 642.4 L1640.7 682.5 L1625.0 731.0 L1501.3 691.0Z M1537.6 652.5 L1665.6 675.0 L1656.8 725.2 L1528.7 702.7Z M1560.9 659.1 L1690.4 669.8 L1686.2 720.6 L1556.7 709.9Z M1585.6 663.0 L1715.6 665.9 L1714.5 716.9 L1584.5 714.0Z M1611.4 664.9 L1741.4 663.6 L1741.9 714.6 L1611.9 715.9Z M1637.8 665.2 L1767.8 663.3 L1768.6 714.3 L1638.6 716.2Z M1664.6 665.0 L1794.6 663.8 L1795.1 714.8 L1665.1 716.0Z M1691.3 664.7 L1821.3 664.2 L1821.5 715.2 L1691.5 715.7Z M1718.0 664.5 L1848.0 664.6 L1848.0 715.6 L1718.0 715.5Z M1744.8 664.5 L1874.8 665.1 L1874.5 716.1 L1744.5 715.5Z M1771.4 664.5 L1901.4 665.6 L1901.0 716.6 L1771.0 715.5Z M1798.1 664.7 L1928.1 666.1 L1927.5 717.1 L1797.5 715.7Z M1824.8 664.9 L1954.7 666.6 L1954.1 717.6 L1824.1 715.9Z M1851.4 665.3 L1981.4 667.1 L1980.6 718.1 L1850.7 716.3Z" fill="none" stroke="#e8e800" stroke-width="1"/>
<path d="M916.0 235.3 L1100.0 234.4 L1102.3 234.6 L1104.4 234.5 L1106.5 234.5 L1108.6 234.4 L1110.7 234.3 L1112.8 234.3 L1114.9 234.2 L1117.0 234.1 L1119.1 234.1 L1121.2 234.0 L1123.3 234.0 L1125.5 233.9 L1127.6 233.9 L1129.7 233.8 L1131.8 233.8 L1133.9 233.8 L1136.0 233.7 L1138.2 233.7 L1140.3 233.7 L1142.4 233.7 L1144.5 233.6 L1146.6 233.6 L1148.8 233.6 L1150.9 233.6 L1153.0 233.7 L1155.2 233.7 L1157.3 233.7 L1159.4 233.7 L1161.5 233.8 L1163.7 233.8 L1165.8 233.9 L1167.9 233.9 L1170.1 234.0 L1172.2 234.1 L1174.3 234.2 L1176.5 234.3 L1178.6 234.4 L1180.8 234.5 L1182.9 234.6 L1185.0 234.7 L1187.2 234.9 L1189.3 235.0 L1191.4 235.2 L1193.6 235.4 L1195.7 235.5 L1197.8 235.7 L1200.0 235.9 L1202.1 236.1 L1204.2 236.4 L1206.4 236.6 L1208.5 236.9 L1210.6 237.1 L1212.8 237.4 L1214.9 237.7 L1217.0 238.0 L1219.2 238.3 L1221.3 238.6 L1223.4 239.0 L1225.6 239.3 L1227.7 239.7 L1229.8 240.1 L1231.9 240.5 L1234.1 240.9 L1236.2 241.3 L1238.3 241.7 L1240.4 242.2 L1242.5 242.7 L1244.6 243.1 L1246.8 243.6 L1248.9 244.1 L1251.0 244.7 L1253.1 245.2 L1255.2 245.8 L1257.3 246.3 L1259.3 246.9 L1261.4 247.5 L1263.5 248.1 L1265.6 248.7 L1267.7 249.4 L1269.7 250.0 L1271.8 250.7 L1273.8 251.4 L1275.9 252.1 L1277.9 252.8 L1280.0 253.5 L1282.0 254.3 L1284.0 255.1 L1286.0 255.8 L1288.0 256.6 L1290.0 257.4 L1292.0 258.3 L1294.0 259.1 L1296.0 259.9 L1298.0 260.8 L1299.9 261.7 L1301.9 262.6 L1303.8 263.5 L1305.8 264.5 L1307.7 265.4 L1309.6 266.4 L1311.5 267.4 L1313.4 268.4 L1315.3 269.4 L1317.2 270.4 L1319.0 271.4 L1320.9 272.5 L1322.7 273.6 L1324.6 274.7 L1326.4 275.8 L1328.2 276.9 L1330.0 278.1 L1331.8 279.2 L1333.6 280.4 L1335.3 281.6 L1337.1 282.8 L1338.8 284.0 L1340.5 285.3 L1342.3 286.5 L1344.0 287.8 L1345.6 289.1 L1347.3 290.4 L1349.0 291.7 L1350.6 293.1 L1352.2 294.5 L1353.8 295.8 L1355.4 297.2 L1357.0 298.6 L1358.6 300.1 L1360.1 301.5 L1361.7 303.0 L1363.2 304.5 L1364.7 305.9 L1366.2 307.5 L1367.7 309.0 L1369.1 310.5 L1370.6 312.1 L1372.0 313.6 L1373.4 315.2 L1374.8 316.8 L1376.2 318.4 L1377.6 320.0 L1378.9 321.7 L1380.3 323.3 L1381.6 325.0 L1382.9 326.7 L1384.2 328.4 L1385.5 330.1 L1386.7 331.8 L1387.9 333.5 L1389.2 335.2 L1390.4 337.0 L1391.6 338.8 L1392.7 340.5 L1393.9 342.3 L1395.0 344.1 L1396.1 345.9 L1397.2 347.7 L1398.3 349.6 L1399.4 351.4 L1400.5 353.2 L1401.5 355.1 L1402.5 357.0 L1403.5 358.8 L1404.5 360.7 L1405.5 362.6 L1406.4 364.5 L1407.3 366.4 L1408.2 368.4 L1409.1 370.3 L1410.0 372.2 L1410.9 374.2 L1411.7 376.1 L1412.5 378.1 L1413.3 380.0 L1414.1 382.0 L1414.9 384.0 L1415.6 386.0 L1416.4 388.0 L1417.1 390.0 L1417.8 392.0 L1418.4 394.0 L1419.1 396.0 L1419.7 398.0 L1420.3 400.1 L1420.9 402.1 L1421.5 404.1 L1422.1 406.2 L1422.6 408.2 L1423.1 410.3 L1423.6 412.3 L1424.1 414.4 L1424.5 416.5 L1425.0 418.5 L1425.4 420.6 L1425.8 422.7 L1426.2 424.7 L1426.6 426.8 L1426.9 428.9 L1427.2 431.0 L1427.6 433.1 L1427.9 435.2 L1428.1 437.3 L1428.4 439.4 L1428.7 441.5 L1428.9 443.6 L1429.2 445.7 L1429.4 447.8 L1429.6 449.9 L1429.8 452.1 L1430.0 454.2 L1430.2 456.3 L1430.3 458.4 L1430.5 460.6 L1430.7 462.7 L1430.8 464.9 L1430.9 467.0 L1431.1 469.2 L1431.2 471.3 L1431.3 473.5 L1431.4 475.6 L1431.6 477.8 L1431.7 479.9 L1431.8 482.1 L1431.9 484.3 L1432.0 486.5 L1432.1 488.6 L1432.2 490.8 L1432.3 493.0 L1432.4 495.2 L1432.5 497.4 L1432.6 499.6 L1432.7 501.7 L1432.8 503.9 L1432.9 505.0" fill="none" stroke="#00ff00" stroke-width="11" stroke-linejoin="round"/>
<path d="M1432.9 505.0 L1432.9 506.1 L1433.0 508.3 L1433.2 510.5 L1433.3 512.8 L1433.4 515.0 L1433.5 517.2 L1433.7 519.4 L1433.8 521.6 L1434.0 523.8 L1434.2 526.0 L1434.3 528.3 L1434.5 530.5 L1434.7 532.7 L1434.9 534.9 L1435.1 537.1 L1435.3 539.3 L1435.5 541.5 L1435.8 543.7 L1436.0 545.9 L1436.3 548.1 L1436.5 550.3 L1436.8 552.5 L1437.1 554.7 L1437.4 556.9 L1437.7 559.0 L1438.1 561.2 L1438.4 563.4 L1438.8 565.5 L1439.2 567.7 L1439.6 569.8 L1440.0 571.9 L1440.4 574.0 L1440.9 576.2 L1441.3 578.2 L1441.8 580.3 L1442.3 582.4 L1442.8 584.5 L1443.4 586.5 L1443.9 588.6 L1444.5 590.6 L1445.1 592.6 L1445.7 594.6 L1446.4 596.6 L1447.0 598.6 L1447.7 600.6 L1448.4 602.5 L1449.2 604.5 L1449.9 606.4 L1450.7 608.3 L1451.5 610.2 L1452.3 612.0 L1453.2 613.9 L1454.1 615.7 L1455.0 617.6 L1455.9 619.4 L1456.9 621.1 L1457.8 622.9 L1458.9 624.6 L1459.9 626.4 L1461.0 628.1 L1462.1 629.7 L1463.2 631.4 L1464.4 633.0 L1465.6 634.6 L1466.8 636.2 L1468.0 637.8 L1469.3 639.4 L1470.6 640.9 L1472.0 642.4 L1473.3 643.9 L1474.7 645.3 L1476.2 646.7 L1477.6 648.1 L1479.1 649.5 L1480.6 650.9 L1482.2 652.2 L1483.7 653.5 L1485.3 654.8 L1486.9 656.1 L1488.5 657.3 L1490.2 658.5 L1491.9 659.7 L1493.6 660.9 L1495.3 662.0 L1497.0 663.2 L1498.8 664.3 L1500.6 665.3 L1502.4 666.4 L1504.2 667.4 L1506.1 668.4 L1507.9 669.4 L1509.8 670.3 L1511.7 671.3 L1513.6 672.2 L1515.5 673.0 L1517.4 673.9 L1519.4 674.7 L1521.3 675.5 L1523.3 676.3 L1525.3 677.1 L1527.3 677.8 L1529.3 678.5 L1531.3 679.2 L1533.3 679.8 L1535.4 680.5 L1537.4 681.1 L1539.5 681.6 L1541.5 682.2 L1543.6 682.7 L1545.7 683.3 L1547.8 683.8 L1549.9 684.2 L1552.0 684.7 L1554.1 685.1 L1556.2 685.5 L1558.3 685.9 L1560.5 686.3 L1562.6 686.7 L1564.8 687.0 L1566.9 687.3 L1569.1 687.6 L1571.2 687.9 L1573.4 688.2 L1575.6 688.4 L1577.8 688.7 L1579.9 688.9 L1582.1 689.1 L1584.3 689.3 L1586.5 689.5 L1588.7 689.7 L1590.9 689.8 L1593.1 690.0 L1595.3 690.1 L1597.5 690.2 L1599.8 690.3 L1602.0 690.4 L1604.2 690.5 L1606.4 690.6 L1608.6 690.6 L1610.9 690.7 L1613.1 690.8 L1615.3 690.8 L1617.5 690.8 L1619.7 690.9 L1622.0 690.9 L1624.2 690.9 L1626.4 690.9 L1628.6 690.9 L1630.9 690.9 L1633.1 690.9 L1635.3 690.9 L1637.5 690.8 L1639.7 690.8 L1641.9 690.8 L1644.1 690.8 L1646.3 690.7 L1648.5 690.7 L1650.7 690.7 L1652.9 690.6 L1655.1 690.6 L1657.3 690.6 L1659.5 690.5 L1661.7 690.5 L1663.8 690.5 L1666.0 690.4 L1668.2 690.4 L1670.3 690.4 L1672.5 690.3 L1674.6 690.3 L1676.8 690.3 L1678.9 690.2 L1681.0 690.2 L1683.2 690.2 L1685.3 690.2 L1687.4 690.1 L1689.5 690.1 L1691.7 690.1 L1693.8 690.1 L1695.9 690.1 L1698.0 690.1 L1700.1 690.0 L1702.2 690.0 L1704.3 690.0 L1706.4 690.0 L1708.5 690.0 L1710.6 690.0 L1712.7 690.0 L1714.8 689.9 L1716.9 689.9 L1718.9 689.9 L1721.0 689.9 L1723.1 689.9 L1725.2 689.9 L1727.3 689.9 L1729.3 689.9 L1731.4 689.9 L1733.5 689.9 L1735.6 689.9 L1737.6 689.9 L1739.7 689.9 L1741.8 689.9 L1743.8 689.9 L1745.9 689.9 L1748.0 689.9 L1750.0 689.9 L1752.1 689.9 L1754.2 689.9 L1756.2 689.9 L1758.3 689.9 L1760.4 689.9 L1762.4 689.9 L1764.5 689.9 L1766.6 689.9 L1768.7 689.9 L1770.7 690.0 L1772.8 690.0 L1774.9 690.0 L1776.9 690.0 L1779.0 690.0 L1781.1 690.0 L1783.2 690.0 L1785.2 690.0 L1787.3 690.1 L1789.4 690.1 L1791.5 690.1 L1793.6 690.1 L1795.7 690.1 L1797.8 690.1 L1799.9 690.2 L1801.9 690.2 L1804.0 690.2 L1806.1 690.2 L1808.3 690.2 L1810.4 690.3 L1812.5 690.3 L1814.6 690.3 L1816.7 690.3 L1818.8 690.3 L1820.9 690.4 L1823.1 690.4 L1825.2 690.4 L1827.3 690.4 L1829.5 690.5 L1831.6 690.5 L1833.8 690.5 L1835.9 690.5 L1838.1 690.6 L1840.2 690.6 L1842.4 690.6 L1844.5 690.6 L1846.7 690.7 L1848.9 690.7 L1851.1 690.7 L1853.3 690.8 L1855.5 690.8 L1857.7 690.8 L1859.9 690.8 L1862.1 690.9 L1864.3 690.9 L1866.5 690.9 L1868.7 691.0 L1871.0 691.0 L1873.2 691.0 L1875.4 691.1 L1877.7 691.1 L1880.0 691.1" fill="none" stroke="#ff0000" stroke-width="11" stroke-linejoin="round"/>
<rect x="1179" y="199" width="12" height="74" fill="#808080"/>
<path d="M1631 274 L1643 274 L1644 353 L1632 353Z" fill="#808080"/>
<rect x="1324" y="481" width="76" height="13" fill="#808080"/>
<path d="M1499.5 591 L1567.5 597 L1568 791 L1499.5 791Z" fill="#64736a" fill-opacity="0.28"/>
<g>
<rect x="1051" y="205.5" width="126.5" height="51.5" rx="15" fill="#e4ece4" fill-opacity="0.42" stroke="#a8a8a8" stroke-opacity="0.75" stroke-width="1.4"/>
<path d="M1070 206 H1160 Q1172 207 1176 214 V216 H1070Z" fill="#202020" fill-opacity="0.3"/>
<path d="M1070 257 H1160 Q1172 256 1176 249 V247 H1070Z" fill="#202020" fill-opacity="0.3"/>
<rect x="1122" y="214" width="25" height="34" fill="#103010" fill-opacity="0.28"/>
<rect x="1056" y="212" width="12" height="38" rx="5" fill="#103010" fill-opacity="0.22"/>
<rect x="1058" y="211" width="114" height="40" rx="11" fill="none" stroke="#c8c8c8" stroke-opacity="0.35" stroke-width="1"/>
</g>
<path d="M1410 227 L1436 233.5 L1410 241Z" fill="#505050"/>
<path d="M1523 227 L1550 233 L1523 242Z" fill="#505050"/>
<path d="M1532 241 L1559 247 L1538 256Z" fill="#585870"/>
<path d="M1441 299 L1466 290.6 L1453 309Z" fill="#585870"/>
<path d="M1274 316 L1299 307 L1299 322Z" fill="#505050"/>
<path d="M1251 329.6 L1276.5 324.5 L1271.4 341Z" fill="#4f5c5c"/>
<path d="M1499 313 L1524 306.8 L1524 319.5Z" fill="#505050"/>
<path d="M1522 344.7 L1534.4 324.5 L1544.5 337Z" fill="#4f5c5c"/>
<path d="M1322 378.6 L1344.7 390 L1334.6 402.9Z" fill="#4f5c5c"/>
<path d="M1352 481 L1358 462 L1362 481Z" fill="#4f5c5c"/>
<path d="M1360 481 L1366 462 L1370 481Z" fill="#4f5c5c"/>
<path d="M1613 314.4 L1630.5 306.8 L1630.5 319.5Z" fill="#4f5c5c"/>
<path d="M1401.6 722 L1426.3 717 L1406.6 735Z" fill="#585870"/>
<path d="M1459 392 L1474 396.5 L1459.5 416.6Z" fill="#4f5c5c"/>
<path d="M1362 791 L1378 772 L1378 791Z" fill="#4f5c5c"/>
<path d="M1431 551 L1446 551 L1439.4 575.6Z" fill="#9a9a9a" fill-opacity="0.4"/>
<path d="M1442.7 631.5 L1452.6 621.6 L1462.5 641Z" fill="#9a9a9a" fill-opacity="0.4"/>
<path d="M1498.6 672.6 L1525 680.8 L1498.6 687.4Z" fill="#9a9a9a" fill-opacity="0.4"/>
<path d="M1196 230 L1222 236 L1196 242Z" fill="#9a9a9a" fill-opacity="0.4"/>
<path d="M1375 290 L1395 310 L1380 315Z" fill="#9a9a9a" fill-opacity="0.4"/>
<path d="M1410 420 L1425 440 L1410 445Z" fill="#9a9a9a" fill-opacity="0.4"/>
<circle cx="1362" cy="173" r="3" fill="#0f240f"/>
<circle cx="1373" cy="173" r="3" fill="#25250f"/>
<circle cx="1384" cy="173" r="3" fill="#250f0f"/>
<circle cx="1625" cy="227" r="3" fill="#0f240f"/>
<circle cx="1625" cy="238" r="3" fill="#25250f"/>
<circle cx="1625" cy="248" r="3" fill="#250f0f"/>
<circle cx="1180" cy="296" r="3" fill="#250f0f"/>
<circle cx="1180" cy="306" r="3" fill="#25250f"/>
<circle cx="1180" cy="317" r="3" fill="#0f240f"/>
</svg>
</body></html>
